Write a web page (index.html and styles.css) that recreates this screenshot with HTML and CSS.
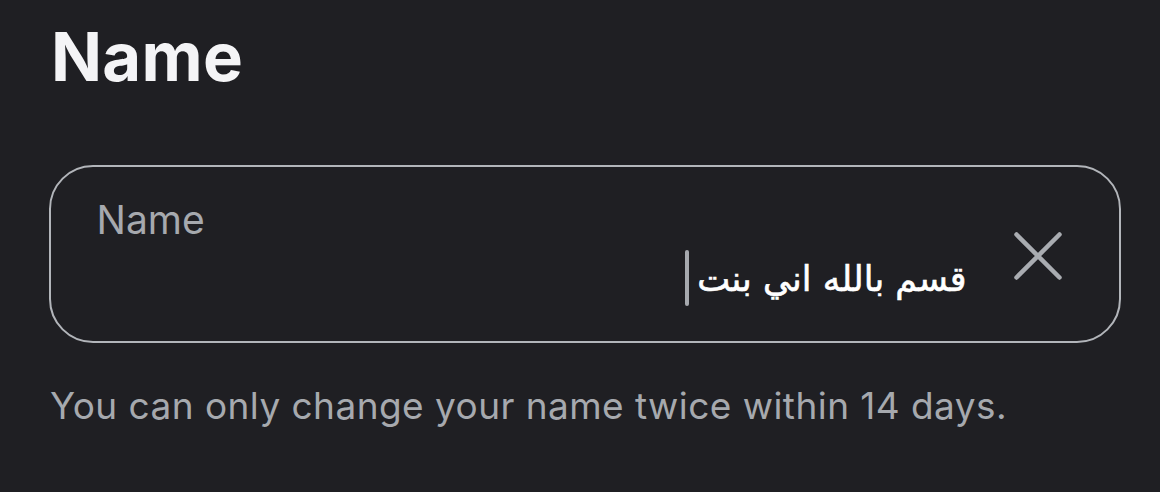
FILE: index.html
```html
<!DOCTYPE html>
<html lang="en">
<head>
<meta charset="utf-8">
<link rel="stylesheet" href="styles.css">
</head>
<body>
<main class="page">
  <h1 class="title">Name</h1>
  <div class="field">
    <div class="field-main">
      <div class="field-label">Name</div>
      <div class="field-value"><span class="cursor"></span><span class="value-text" dir="rtl">قسم بالله اني بنت</span></div>
    </div>
    <button class="clear" aria-label="Clear">
      <svg viewBox="0 0 48 48" width="48" height="48"><path d="M2.5 2.5 L45.5 45.5 M45.5 2.5 L2.5 45.5" stroke="#a9acb1" stroke-width="4.5" stroke-linecap="round" fill="none"/></svg>
    </button>
  </div>
  <p class="helper">You can only change your name twice within 14 days.</p>
</main>
</body>
</html>
```
FILE: styles.css
```css
html, body {
  margin: 0;
  padding: 0;
  background: #1f1f23;
}
body {
  width: 1160px;
  height: 492px;
  overflow: hidden;
  font-family: Inter, "Noto Sans", sans-serif;
}
.page {
  padding: 23px 39px 0 49px;
}
.title {
  margin: 0 0 0 2px;
  font-size: 67px;
  line-height: 1;
  font-weight: 700;
  color: #f4f4f6;
  letter-spacing: 0.3px;
}
.field {
  margin-top: 75px;
  box-sizing: border-box;
  height: 178px;
  border: 2.5px solid #b2b5ba;
  border-radius: 44px;
  display: flex;
  align-items: flex-start;
  padding: 0 57.5px 0 45.5px;
}
.field-main {
  flex: 1;
  display: flex;
  flex-direction: column;
  padding-top: 32.5px;
}
.field-label {
  font-size: 39px;
  line-height: 1;
  color: #a6a9ae;
}
.field-value {
  display: flex;
  justify-content: flex-end;
  align-items: center;
  margin-top: 11px;
  height: 56px;
}
.value-text {
  font-family: "DejaVu Sans", sans-serif;
  font-size: 35px;
  line-height: 1;
  color: #ffffff;
  -webkit-text-stroke: 0.6px #ffffff;
  margin-top: 3px;
}
.cursor {
  width: 4px;
  height: 56px;
  background: #a6a9ae;
  border-radius: 2px;
  margin-right: 8px;
}
.clear {
  margin-left: 47px;
  margin-top: 64.5px;
  width: 48px;
  height: 48px;
  padding: 0;
  border: 0;
  background: none;
  display: flex;
}
.helper {
  margin: 44px 0 0 1px;
  font-size: 37px;
  line-height: 1;
  letter-spacing: 0.45px;
  color: #a6a9ae;
}
```
